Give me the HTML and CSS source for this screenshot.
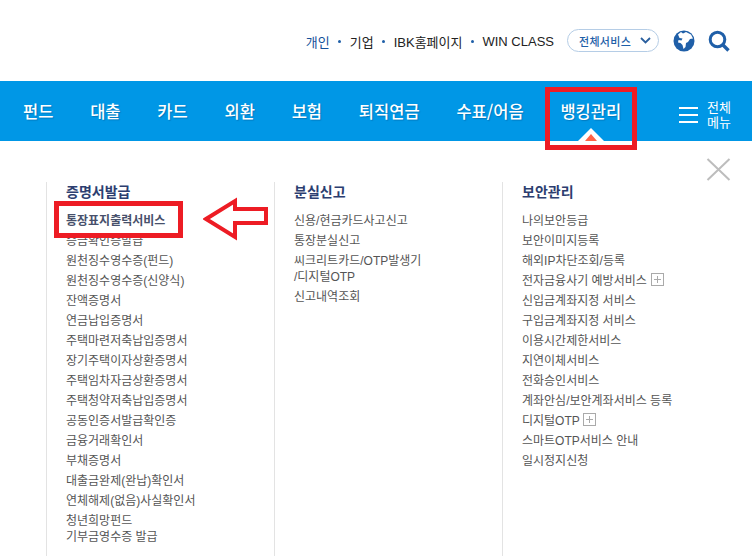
FILE: index.html
```html
<!DOCTYPE html>
<html lang="ko">
<head>
<meta charset="utf-8">
<title>IBK</title>
<link rel="stylesheet" href="styles.css">
</head>
<body>
<header class="top">
  <nav class="links">
    <a class="link on">개인</a><i class="dot"></i>
    <a class="link">기업</a><i class="dot"></i>
    <a class="link">IBK홈페이지</a><i class="dot"></i>
    <a class="link">WIN CLASS</a>
  </nav>
  <button class="all">전체서비스<svg width="11" height="7" viewBox="0 0 11 7"><path d="M1 1l4.500 4.500L10 1" fill="none" stroke="#2a5f9e" stroke-width="1.800"/></svg></button>
  <svg class="globe" width="22" height="22" viewBox="0 0 22 22"><circle cx="11" cy="11" r="10.500" fill="#1f5fa8"/><path d="M5 4.500l3-2.500 2 1.500 3-1.500 5 2.500 2 4-3 .5-2 3-2 1-.5 4-2 2-1-4-2-2-2.500-.5.500-2.500 3 .5 1-2-3-.5z" fill="#fff"/></svg>
  <svg class="search" width="22" height="22" viewBox="0 0 22 22"><circle cx="9.500" cy="9.500" r="7.300" fill="none" stroke="#1f5fa8" stroke-width="3"/><path d="M14.500 14.500l6 6" stroke="#1f5fa8" stroke-width="3.400"/></svg>
</header>
<div class="bar">
  <a class="tab">펀드</a>
  <a class="tab">대출</a>
  <a class="tab">카드</a>
  <a class="tab">외환</a>
  <a class="tab">보험</a>
  <a class="tab">퇴직연금</a>
  <a class="tab">수표/어음</a>
  <a class="tab active">뱅킹관리</a>
  <a class="menu">
    <span class="burger"><i></i><i></i><i></i></span>
    <span class="menu-txt">전체<br>메뉴</span>
  </a>
  <span class="caret"></span>
  <span class="mark mark-tab"></span>
</div>
<main class="panel">
  <svg class="close" width="25" height="23" viewBox="0 0 25 23"><path d="M1.500 1l22 21M23.500 1l-22 21" stroke="#bdbdbd" stroke-width="2" fill="none"/></svg>
  <section class="col">
    <h2>증명서발급</h2>
    <ul>
      <li class="strong">통장표지출력서비스</li>
      <li>증금확인증발급</li>
      <li>원천징수영수증(펀드)</li>
      <li>원천징수영수증(신양식)</li>
      <li>잔액증명서</li>
      <li>연금납입증명서</li>
      <li>주택마련저축납입증명서</li>
      <li>장기주택이자상환증명서</li>
      <li>주택임차자금상환증명서</li>
      <li>주택청약저축납입증명서</li>
      <li>공동인증서발급확인증</li>
      <li>금융거래확인서</li>
      <li>부채증명서</li>
      <li>대출금완제(완납)확인서</li>
      <li>연체해제(없음)사실확인서</li>
      <li class="two">청년희망펀드<br>기부금영수증 발급</li>
    </ul>
    <span class="mark mark-item"></span>
    <svg class="arrow" width="66" height="46" viewBox="0 0 66 46"><path d="M3 22L32 4v8h31v14H32v14z" fill="#fff" stroke="#ed1c24" stroke-width="4"/></svg>
  </section>
  <section class="col">
    <h2>분실신고</h2>
    <ul>
      <li>신용/현금카드사고신고</li>
      <li>통장분실신고</li>
      <li class="two">씨크리트카드/OTP발생기<br>/디지털OTP</li>
      <li>신고내역조회</li>
    </ul>
  </section>
  <section class="col">
    <h2>보안관리</h2>
    <ul>
      <li>나의보안등급</li>
      <li>보안이미지등록</li>
      <li>해외IP차단조회/등록</li>
      <li>전자금융사기 예방서비스<i class="plus"></i></li>
      <li>신입금계좌지정 서비스</li>
      <li>구입금계좌지정 서비스</li>
      <li>이용시간제한서비스</li>
      <li>지연이체서비스</li>
      <li>전화승인서비스</li>
      <li>계좌안심/보안계좌서비스 등록</li>
      <li>디지털OTP<i class="plus tight"></i></li>
      <li>스마트OTP서비스 안내</li>
      <li>일시정지신청</li>
    </ul>
  </section>
</main>
</body>
</html>
```
FILE: styles.css
```css
* { box-sizing: border-box; }
html, body { margin: 0; padding: 0; }
body {
  width: 752px;
  height: 556px;
  overflow: hidden;
  background: #fff;
  font-family: "Liberation Sans", "Noto Sans CJK KR", sans-serif;
  color: #555;
}
.top {
  height: 81px;
  display: flex;
  align-items: center;
  justify-content: flex-end;
  padding: 0 22px 0 0;
}
.links { display: flex; align-items: center; padding-top: 1px; }
.link {
  font-size: 13px;
  color: #222;
}
.link.on { color: #14509a; }
.dot {
  width: 3px;
  height: 3px;
  border-radius: 50%;
  background: #1f5fa8;
  margin: 0 8.500px;
}
.all {
  margin-left: 13px;
  width: 92px;
  height: 23px;
  border: 1px solid #b5cde6;
  border-radius: 12px;
  background: #fff;
  color: #1f5fa8;
  font: 500 11px "Noto Sans CJK KR", sans-serif;
  letter-spacing: .3px;
  display: flex;
  align-items: center;
  justify-content: space-between;
  padding: 0 7px 0 11px;
}
.globe { margin-left: 14px; }
.search { margin-left: 13px; }
.bar {
  position: relative;
  height: 60px;
  background: #0097e6;
  display: flex;
  align-items: center;
  padding-left: 23px;
  gap: 36.800px;
}
.tab {
  color: #fff;
  font-size: 16.500px;
  font-weight: 500;
  font-family: "Noto Sans CJK KR", sans-serif;
  text-shadow: 1px 1px 1px rgba(0, 70, 120, .35);
}
.menu {
  display: flex;
  align-items: center;
  gap: 9px;
  margin-left: 21px;
  padding-top: 7px;
  color: #fff;
}
.burger { display: flex; flex-direction: column; gap: 5px; }
.burger i { display: block; width: 19px; height: 2px; background: #fff; }
.menu-txt { font-size: 13px; line-height: 15px; text-align: center; }
.caret {
  position: absolute;
  left: 578px;
  top: 47px;
  border-left: 13px solid transparent;
  border-right: 13px solid transparent;
  border-bottom: 13px solid #fff;
}
.caret::after {
  content: "";
  position: absolute;
  left: -6px;
  top: 6px;
  border-left: 6px solid transparent;
  border-right: 6px solid transparent;
  border-bottom: 7px solid #ff6347;
}
.mark { position: absolute; border: 5px solid #ed1c24; }
.mark-tab { left: 545px; top: 6px; width: 92px; height: 63px; }
.panel {
  position: relative;
  display: flex;
  padding: 41px 0 0 46px;
}
.close { position: absolute; left: 706px; top: 17px; }
.col {
  position: relative;
  width: 228px;
  height: 380px;
  border-left: 1px solid #e3e3e3;
  padding-left: 19px;
}
h2 {
  margin: 0 0 9px;
  font-size: 14px;
  line-height: 20px;
  font-weight: 700;
  color: #2c3e70;
}
ul { list-style: none; margin: 0; padding: 0; }
li {
  font-size: 12px;
  line-height: 20px;
  color: #555;
  white-space: nowrap;
}
li.two { line-height: 16px; padding: 2px 0; }
li.strong { font-weight: 700; color: #47506b; }
.plus {
  display: inline-block;
  position: relative;
  vertical-align: -1px;
  width: 13px;
  height: 13px;
  margin-left: 4px;
  border: 1px solid #aaa;
  background:
    linear-gradient(#aaa, #aaa) center / 7px 1px no-repeat,
    linear-gradient(#aaa, #aaa) center / 1px 7px no-repeat;
}
.plus.tight { margin-left: 3px; }
.mark-item { left: 7px; top: 19px; width: 129px; height: 37px; }
.arrow { position: absolute; left: 156px; top: 15px; }
```
